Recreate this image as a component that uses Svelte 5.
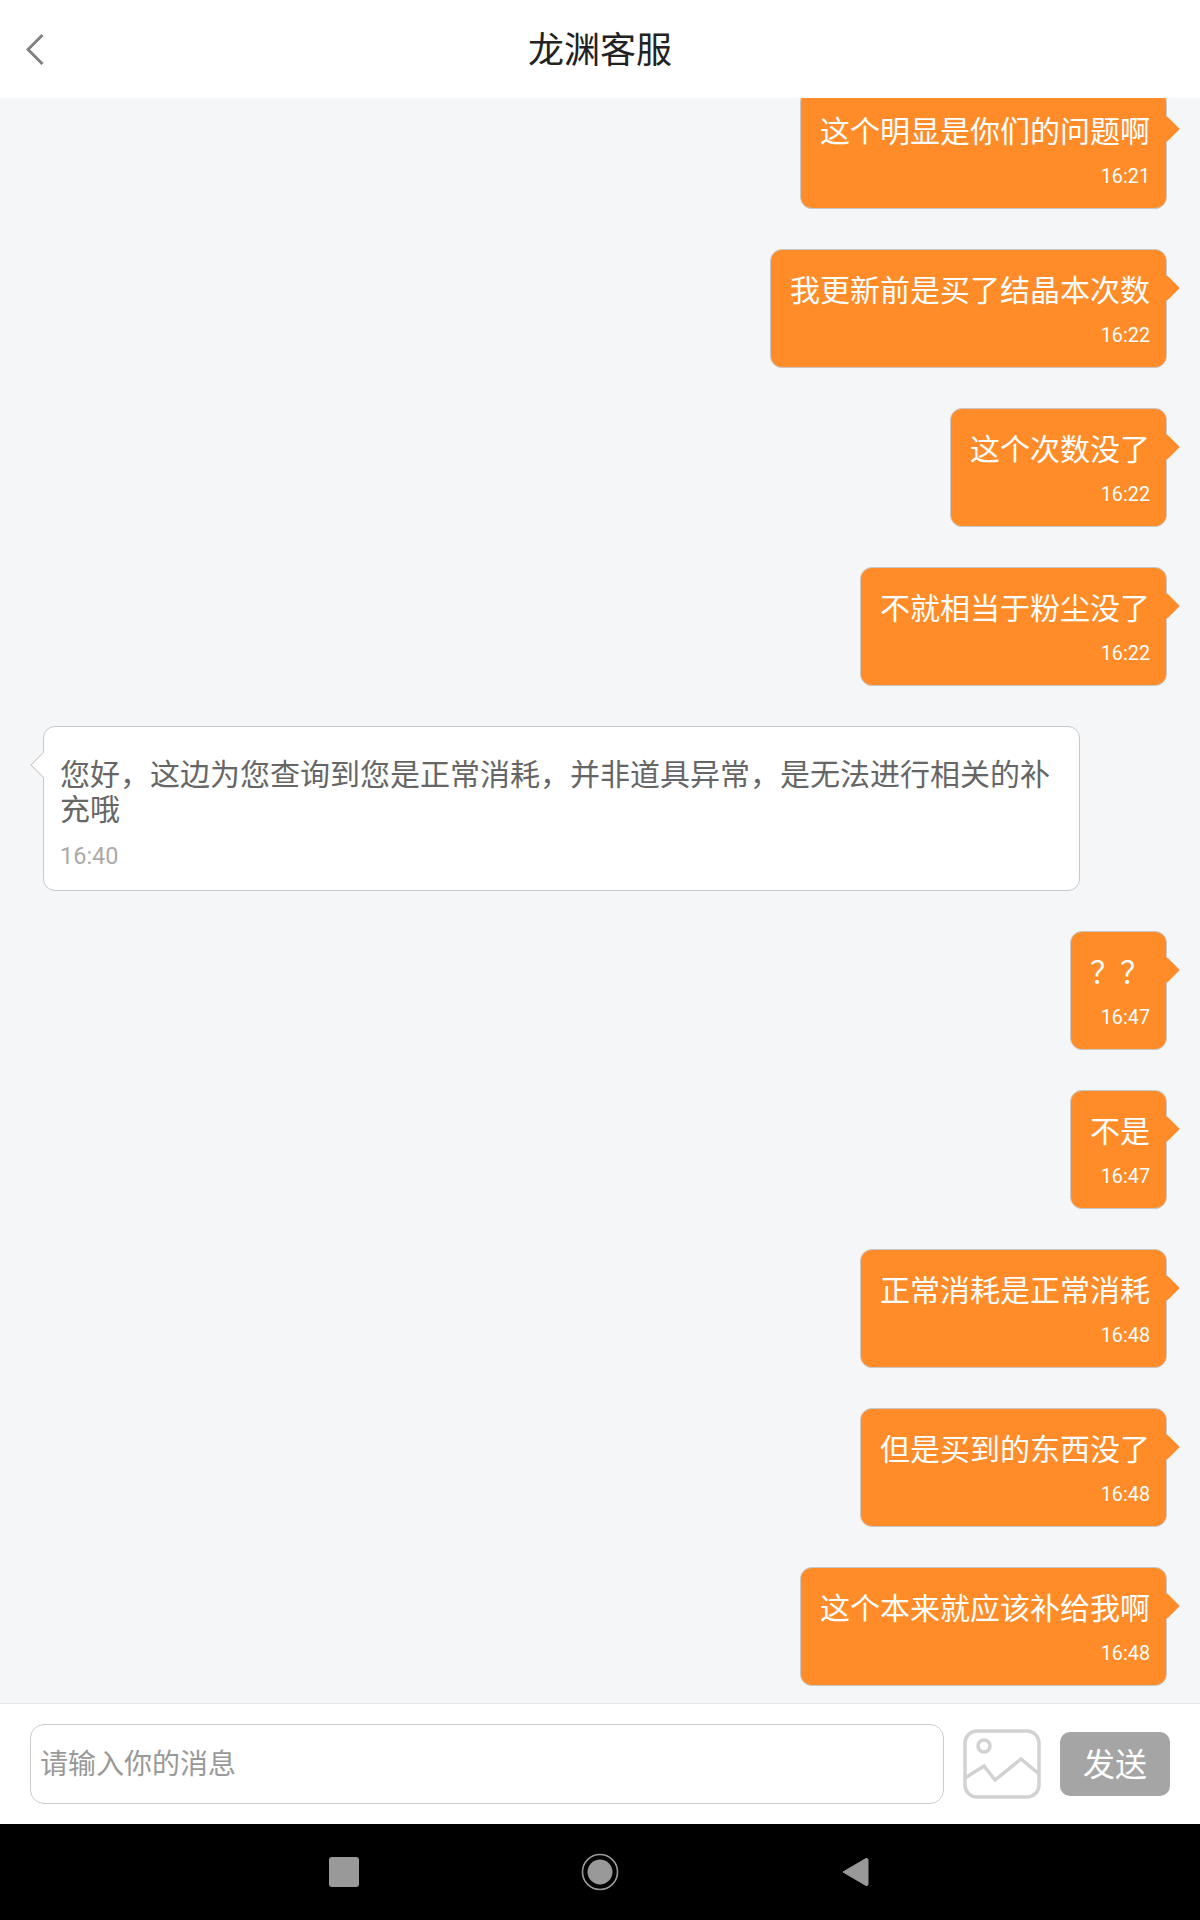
<script lang="ts">
  interface Message {
    readonly side: "me" | "agent";
    readonly text: string;
    readonly time: string;
  }

  const messages: ReadonlyArray<Message> = [
    { side: "me", text: "这个明显是你们的问题啊", time: "16:21" },
    { side: "me", text: "我更新前是买了结晶本次数", time: "16:22" },
    { side: "me", text: "这个次数没了", time: "16:22" },
    { side: "me", text: "不就相当于粉尘没了", time: "16:22" },
    { side: "agent", text: "您好，这边为您查询到您是正常消耗，并非道具异常，是无法进行相关的补充哦", time: "16:40" },
    { side: "me", text: "？？", time: "16:47" },
    { side: "me", text: "不是", time: "16:47" },
    { side: "me", text: "正常消耗是正常消耗", time: "16:48" },
    { side: "me", text: "但是买到的东西没了", time: "16:48" },
    { side: "me", text: "这个本来就应该补给我啊", time: "16:48" },
  ];
</script>

<div class="screen">
  <header class="top">
    <svg class="back" width="18" height="32" viewBox="0 0 18 32" aria-label="back">
      <polyline points="16.5,2 2,16.5 16.5,31" fill="none" stroke="#808080" stroke-width="3" />
    </svg>
    <h1>龙渊客服</h1>
  </header>

  <main class="chat">
    {#each messages as message}
      <div class={`bubble ${message.side}`}>
        <p class="text">{message.text}</p>
        <span class="time">{message.time}</span>
      </div>
    {/each}
  </main>

  <footer class="composer">
    <input type="text" placeholder="请输入你的消息" />
    <svg class="picture" width="78" height="70" viewBox="0 0 78 70" aria-label="picture">
      <rect x="2" y="2" width="74" height="66" rx="12" fill="none" stroke="#d2d2d2" stroke-width="3.5" />
      <circle cx="21" cy="17" r="6" fill="none" stroke="#d2d2d2" stroke-width="3.5" />
      <polyline points="2,49 21,37 32,51 58,30 76,45" fill="none" stroke="#d2d2d2" stroke-width="3.5" />
    </svg>
    <button type="button">发送</button>
  </footer>

  <nav class="system">
    <span class="square"></span>
    <svg width="38" height="38" viewBox="0 0 38 38" aria-label="home">
      <circle cx="19" cy="19" r="17.5" fill="none" stroke="#999" stroke-width="1.6" />
      <circle cx="19" cy="19" r="12.5" fill="#999" />
    </svg>
    <svg width="28" height="32" viewBox="0 0 28 32" aria-label="back">
      <path d="M2 16 L25 2.5 Q27 2 27 4 V28 Q27 30 25 29.5 Z" fill="#999" stroke="#999" stroke-linejoin="round" />
    </svg>
  </nav>
</div>

<style>
  :global(body) {
    margin: 0;
  }

  .screen {
    display: flex;
    flex-direction: column;
    height: 1920px;
    background: #f5f6f8;
    font-family: Roboto, "Noto Sans CJK SC", sans-serif;
  }

  .top {
    position: relative;
    display: flex;
    flex: none;
    align-items: center;
    justify-content: center;
    height: 98px;
    padding-bottom: 4px;
    box-sizing: border-box;
    background: #fff;
  }

  .top h1 {
    margin: 0;
    color: #222;
    font-size: 36px;
    font-weight: 400;
  }

  .back {
    position: absolute;
    top: 33px;
    left: 26px;
  }

  .chat {
    display: flex;
    flex: 1;
    flex-direction: column;
    gap: 40px;
    justify-content: flex-end;
    min-height: 0;
    overflow: hidden;
    padding: 0 33px 17px 43px;
  }

  .bubble {
    position: relative;
    display: flex;
    flex: none;
    flex-direction: column;
    box-sizing: border-box;
    border: 1px solid #c8c8c8;
    border-radius: 12px;
  }

  .bubble::after {
    content: "";
    position: absolute;
    top: 29px;
    width: 18px;
    height: 18px;
    box-sizing: border-box;
    transform: rotate(45deg);
  }

  .me {
    align-self: flex-end;
    padding: 23px 16px 19px 19px;
    background: #ff8c28;
    color: #fff;
  }

  .me::after {
    right: -10px;
    background: #ff8c28;
  }

  .agent {
    width: 1037px;
    padding: 30px 17px 22px 16px;
    background: #fff;
    color: #666;
  }

  .agent::after {
    left: -10px;
    border-bottom: 1px solid #c8c8c8;
    border-left: 1px solid #c8c8c8;
    background: #fff;
  }

  .text {
    margin: 0;
    font-size: 30px;
    line-height: 35px;
  }

  .time {
    margin-top: 16px;
    font-size: 19.8px;
    line-height: 24px;
    text-align: right;
  }

  .agent .time {
    margin-top: 17px;
    color: #aaa;
    font-size: 23.5px;
    text-align: left;
  }

  .composer {
    display: flex;
    flex: none;
    gap: 19px;
    align-items: center;
    box-sizing: border-box;
    height: 121px;
    padding: 0 30px;
    border-top: 1px solid #e8e8e8;
    background: #fff;
  }

  input {
    flex: 1;
    box-sizing: border-box;
    min-width: 0;
    height: 80px;
    padding: 0 10px 0 9px;
    border: 1px solid #ccc;
    border-radius: 14px;
    outline: none;
    font-family: inherit;
    font-size: 28px;
  }

  input::placeholder {
    color: #999;
    opacity: 1;
  }

  .picture {
    flex: none;
  }

  button {
    flex: none;
    width: 110px;
    height: 64px;
    padding: 0 0 4px;
    border: 0;
    border-radius: 10px;
    background: #a5a5a5;
    color: #fff;
    font-family: inherit;
    font-size: 32px;
  }

  .system {
    display: flex;
    flex: none;
    align-items: center;
    justify-content: space-between;
    box-sizing: border-box;
    height: 96px;
    padding: 0 331px 0 329px;
    background: #000;
  }

  .square {
    width: 30px;
    height: 30px;
    border-radius: 3px;
    background: #999;
  }
</style>
